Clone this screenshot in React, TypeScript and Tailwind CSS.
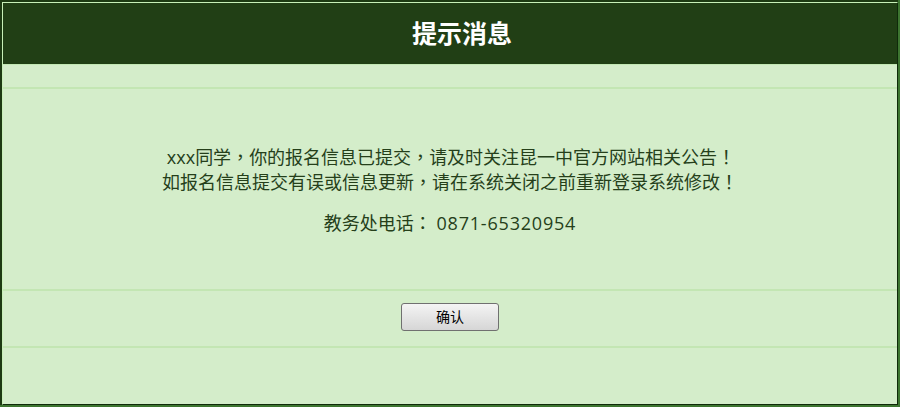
import React from "react";

const P = ({ c }: { c: string }) => (
  <span style={{ fontFamily: '"Noto Sans CJK TC", sans-serif' }}>{c}</span>
);

export default function App() {
  const font = { fontFamily: '"Open Sans", "Noto Sans CJK SC", "Noto Sans", sans-serif' };
  return (
    <div className="w-[900px] h-[407px] bg-[#1d3a12] border-r-2 border-b-2 border-[#3d7530] pl-[2px] pt-[2px] flex" style={font}>
      <div className="flex-1 flex flex-col border border-t-[#c8f0b8] border-l-[#c8f0b8] border-r-[#0f2a0a] border-b-[#0f2a0a] bg-[#d4edca]">
        <div className="h-[61px] bg-[#213f15] flex items-center justify-center pl-[24px]">
          <span className="text-white text-[25px] font-bold leading-none">提示消息</span>
        </div>
        <div className="h-[1px] bg-[#c3e8b4]" />
        <div className="h-[22px]" />
        <div className="h-[2px] bg-[#c3e6b3]" />
        <div className="h-[200px] flex flex-col items-center justify-center text-[18px] text-[#253f1a] leading-[24px]">
          <p className="pl-[2px]">
            xxx同学<P c="，" />你的报名信息已提交<P c="，" />请及时关注昆一中官方网站相关公告<P c="！" />
          </p>
          <p>
            如报名信息提交有误或信息更新<P c="，" />请在系统关闭之前重新登录系统修改<P c="！" />
          </p>
          <p className="mt-[16px]">
            教务处电话<P c="：" /> <span className="tracking-[0.8px]">0871-65320954</span>
          </p>
        </div>
        <div className="h-[2px] bg-[#c3e6b3]" />
        <div className="h-[55px] flex items-center justify-center pb-[4px]">
          <button className="w-[98px] h-[28px] rounded-[3px] border border-[#707070] bg-gradient-to-b from-[#f4f4f4] to-[#d6d6d6] text-[14px] text-black leading-none">
            确认
          </button>
        </div>
        <div className="h-[2px] bg-[#c3e6b3]" />
        <div className="flex-1" />
      </div>
    </div>
  );
}
